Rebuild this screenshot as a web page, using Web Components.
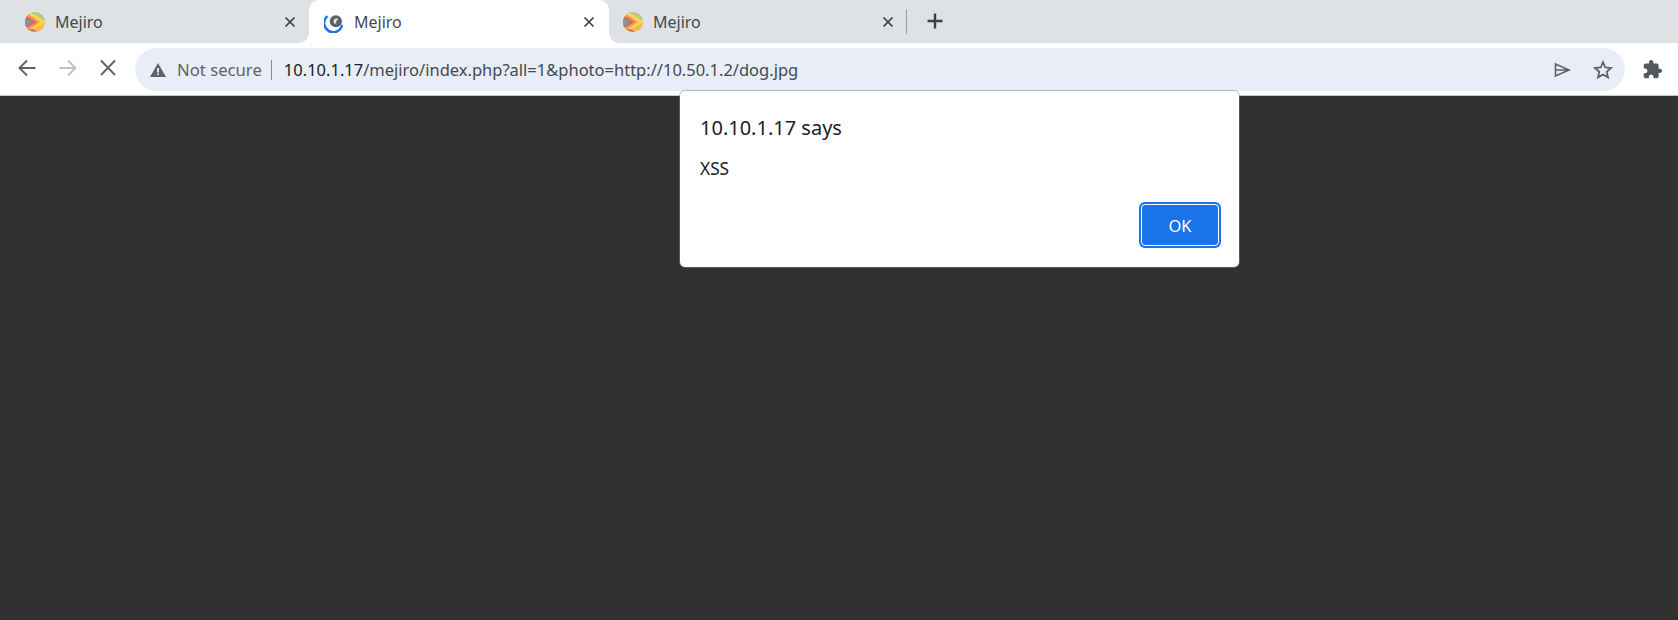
<!DOCTYPE html>
<html>
<head>
<meta charset="utf-8">
<title>Mejiro</title>
<style>
    html, body { margin: 0; height: 100%; background: #313131; overflow: hidden; }
    body { font-family: "Noto Sans", "Open Sans", sans-serif; }
</style>
</head>
<body>
<browser-window>
    <tab-strip>
        <browser-tab icon="mejiro">Mejiro</browser-tab>
        <browser-tab icon="loading" active>Mejiro</browser-tab>
        <browser-tab icon="mejiro" last>Mejiro</browser-tab>
    </tab-strip>
    <nav-toolbar>
        <omni-box host="10.10.1.17" rest="/mejiro/index.php?all=1&amp;photo=http://10.50.1.2/dog.jpg"></omni-box>
    </nav-toolbar>
    <page-view>
        <js-alert title="10.10.1.17 says" message="XSS"></js-alert>
    </page-view>
</browser-window>

<script>
const FAVICONS = {
    mejiro: `<svg width="20" height="20" viewBox="0 0 20 20" style="border-radius:50%">
        <rect width="20" height="20" fill="#f9bb4e"/>
        <path d="M3 0H20V10z" fill="#b0cc88"/>
        <path d="M0-3 22 10 0 23z" fill="#fcd455"/>
        <path d="M0 0 15 10 0 20z" fill="#f39a45"/>
        <path d="M0 3 11.500 10 0 17z" fill="#dc6474"/>
        <path d="M0 6.500 7 10.500 0 14.500z" fill="#69a892"/>
        <path d="M2 20 20 11V20z" fill="#f9b84c"/>
        <path d="M0 17 8 17 12 20H0z" fill="#cc7090"/>
    </svg>`,
    loading: `<svg width="22" height="22" viewBox="0 0 22 22">
        <path d="M3 5.200A10 10 0 1 0 19.700 15.200" fill="none" stroke="#1a73e8" stroke-width="2.600" stroke-linecap="round"/>
        <circle cx="13" cy="10.200" r="6.700" fill="#5f6368"/>
        <path d="M10.500 8.800c1.500-.3 2-1.500 3.800-1.800l1.200 1.800-2.500 1 .8 2.500-2.500.6z" fill="#e8eaed"/>
    </svg>`
};

class BrowserWindow extends HTMLElement {
    constructor() {
        super();
        this.attachShadow({ mode: 'open' });
        this.shadowRoot.innerHTML = `
            <style>
                :host {
                    display: flex;
                    flex-direction: column;
                    height: 100vh;
                    font-family: "Noto Sans", "Open Sans", sans-serif;
                }
            </style>
            <slot></slot>
        `;
    }
}

class TabStrip extends HTMLElement {
    constructor() {
        super();
        this.attachShadow({ mode: 'open' });
        this.shadowRoot.innerHTML = `
            <style>
                :host {
                    display: flex;
                    height: 43px;
                    padding-left: 11px;
                    background: #dee1e6;
                    flex: none;
                }
                .divider {
                    width: 1px;
                    height: 25px;
                    margin: 9px 0 0 -2px;
                    background: #9a9da1;
                }
                .plus { margin: 10px 0 0 17px; width: 22px; height: 22px; }
            </style>
            <slot></slot>
            <div class="divider"></div>
            <svg class="plus" viewBox="0 0 22 22"><path d="M11 3.500v15M3.500 11h15" stroke="#3c4043" stroke-width="2.400"/></svg>
        `;
    }
}

class BrowserTab extends HTMLElement {
    constructor() {
        super();
        this.attachShadow({ mode: 'open' });
        this.shadowRoot.innerHTML = `
            <style>
                :host {
                    display: block;
                    position: relative;
                    width: 299px;
                    height: 43px;
                    color: #45494e;
                    font-size: 16px;
                }
                .body {
                    display: flex;
                    align-items: center;
                    height: 43px;
                    padding: 0 0 0 14px;
                    box-sizing: border-box;
                }
                .icon { width: 20px; height: 20px; flex: none; display: flex; align-items: center; justify-content: center; margin-right: 10px; }
                .label { flex: 1; line-height: 22px; }
                .close { width: 12px; height: 12px; flex: none; margin-right: 14px; }
                :host([active]) { z-index: 1; }
                :host([active]) .body {
                    background: #fff;
                    border-radius: 10px 10px 0 0;
                    width: 300px;
                    margin-left: -1px;
                    padding-left: 15px;
                }
                .flare { display: none; }
                :host([active]) .flare {
                    display: block;
                    position: absolute;
                    bottom: 0;
                    width: 10px;
                    height: 10px;
                    background: #fff;
                }
                :host([active]) .flare::after {
                    content: "";
                    display: block;
                    width: 10px;
                    height: 10px;
                    background: #dee1e6;
                }
                .flare.l { left: -11px; }
                .flare.r { left: 299px; }
                .flare.l::after { border-bottom-right-radius: 10px; }
                .flare.r::after { border-bottom-left-radius: 10px; }
            </style>
            <span class="flare l"></span>
            <div class="body">
                <span class="icon">${FAVICONS[this.getAttribute('icon')]}</span>
                <span class="label"><slot></slot></span>
                <svg class="close" viewBox="0 0 12 12"><path d="M1.500 1.500l9 9M10.500 1.500l-9 9" stroke="#3c4043" stroke-width="1.700"/></svg>
            </div>
            <span class="flare r"></span>
        `;
    }
}

class NavToolbar extends HTMLElement {
    constructor() {
        super();
        this.attachShadow({ mode: 'open' });
        this.shadowRoot.innerHTML = `
            <style>
                :host {
                    display: flex;
                    align-items: flex-start;
                    height: 52px;
                    background: #fff;
                    flex: none;
                }
                svg { flex: none; }
                .nav { margin-top: 14px; width: 22px; height: 22px; }
                .back { margin-left: 16px; }
                .fwd { margin-left: 19px; }
                .stop { margin-left: 18px; }
                .gap { margin-left: 16px; margin-top: 5px; flex: 1; display: flex; }
                .ext { margin: 16px 15px 0 17px; width: 21px; height: 21px; }
            </style>
            <svg class="nav back" viewBox="0 0 22 22"><path d="M19.500 11H4M11 3.500 3.500 11l7.500 7.500" fill="none" stroke="#5f6368" stroke-width="1.900"/></svg>
            <svg class="nav fwd" viewBox="0 0 22 22"><path d="M2.500 11H18M11 3.500l7.500 7.500-7.500 7.500" fill="none" stroke="#bdc1c6" stroke-width="1.900"/></svg>
            <svg class="nav stop" viewBox="0 0 22 22"><path d="M4 3.500l14 14.500M18 3.500 4 18" fill="none" stroke="#5f6368" stroke-width="1.900"/></svg>
            <div class="gap"><slot></slot></div>
            <svg class="ext" viewBox="0 0 24 24"><path d="M20.500 11H19V7c0-1.100-.9-2-2-2h-4V3.500C13 2.120 11.880 1 10.500 1S8 2.120 8 3.500V5H4c-1.100 0-1.990.9-1.990 2v3.800H3.500c1.490 0 2.700 1.210 2.700 2.700s-1.210 2.700-2.700 2.700H2V20c0 1.100.9 2 2 2h3.800v-1.500c0-1.490 1.210-2.700 2.700-2.700 1.490 0 2.700 1.210 2.700 2.700V22H17c1.100 0 2-.9 2-2v-4h1.500c1.380 0 2.500-1.120 2.500-2.500S21.880 11 20.500 11z" fill="#55585c"/></svg>
        `;
    }
}

class OmniBox extends HTMLElement {
    constructor() {
        super();
        this.attachShadow({ mode: 'open' });
        this.shadowRoot.innerHTML = `
            <style>
                :host {
                    display: flex;
                    flex: 1;
                    align-items: center;
                    height: 43px;
                    border-radius: 22px;
                    background: #e8edf7;
                    font-size: 16.500px;
                    color: #202124;
                }
                .warn { margin: 1px 0 0 14px; width: 18px; height: 18px; flex: none; }
                .secure { margin-left: 10px; color: #5f6368; font-size: 16.700px; }
                .sep { width: 1px; height: 20px; background: #8a8e93; margin: 0 12px 0 9px; flex: none; }
                .host { color: #202124; }
                .rest { color: #45494e; }
                .url { flex: 1; white-space: nowrap; }
                .act { width: 20px; height: 20px; flex: none; }
                .send { margin-right: 21px; }
                .star { margin-right: 12px; }
            </style>
            <svg class="warn" viewBox="0 0 18 18"><path d="M9 2 17 16H1z" fill="#5f6368"/><path d="M8.200 7h1.600v4.500H8.200zM8.200 12.500h1.600V14H8.200z" fill="#fff"/></svg>
            <span class="secure">Not secure</span>
            <span class="sep"></span>
            <span class="url"><span class="host">${this.getAttribute('host')}</span><span class="rest">${this.getAttribute('rest').replace(/&/g, '&amp;')}</span></span>
            <svg class="act send" viewBox="0 0 20 20"><path d="M3.500 4 17 10 3.500 16zM3.500 10H17" fill="none" stroke="#5f6368" stroke-width="1.600"/></svg>
            <svg class="act star" viewBox="0 0 20 20"><path d="M10 2.200l2.300 5.300 5.700.5-4.300 3.800 1.300 5.600L10 14.500l-5 2.900 1.300-5.600L2 8l5.700-.5z" fill="none" stroke="#5f6368" stroke-width="1.800"/></svg>
        `;
    }
}

class PageView extends HTMLElement {
    constructor() {
        super();
        this.attachShadow({ mode: 'open' });
        this.shadowRoot.innerHTML = `
            <style>
                :host {
                    display: block;
                    flex: 1;
                    position: relative;
                    background: #313131;
                    border-top: 1px solid #c8c8c8;
                }
            </style>
            <slot></slot>
        `;
    }
}

class JsAlert extends HTMLElement {
    constructor() {
        super();
        this.attachShadow({ mode: 'open' });
        this.shadowRoot.innerHTML = `
            <style>
                :host {
                    display: flex;
                    flex-direction: column;
                    position: absolute;
                    left: 680px;
                    top: -5px;
                    width: 559px;
                    height: 176px;
                    box-sizing: border-box;
                    padding: 23px 18px 19px 20px;
                    background: #fff;
                    border-radius: 5px;
                    box-shadow: 0 0 0 1px rgba(130, 130, 130, .5);
                    color: #202124;
                }
                .title { font-size: 20px; line-height: 28px; }
                .msg { font-size: 17.300px; line-height: 22px; margin-top: 16px; }
                .actions { margin-top: auto; display: flex; justify-content: flex-end; }
                button {
                    width: 82px;
                    height: 46px;
                    padding: 0;
                    font: inherit;
                    font-size: 16.500px;
                    color: #fff;
                    background: #1a73e8;
                    border: 0;
                    border-radius: 6px;
                    outline: 1px solid #fff;
                    outline-offset: -3px;
                }
            </style>
            <div class="title">${this.getAttribute('title')}</div>
            <div class="msg">${this.getAttribute('message')}</div>
            <div class="actions"><button>OK</button></div>
        `;
    }
}

customElements.define('browser-window', BrowserWindow);
customElements.define('tab-strip', TabStrip);
customElements.define('browser-tab', BrowserTab);
customElements.define('nav-toolbar', NavToolbar);
customElements.define('omni-box', OmniBox);
customElements.define('page-view', PageView);
customElements.define('js-alert', JsAlert);
</script>
</body>
</html>
